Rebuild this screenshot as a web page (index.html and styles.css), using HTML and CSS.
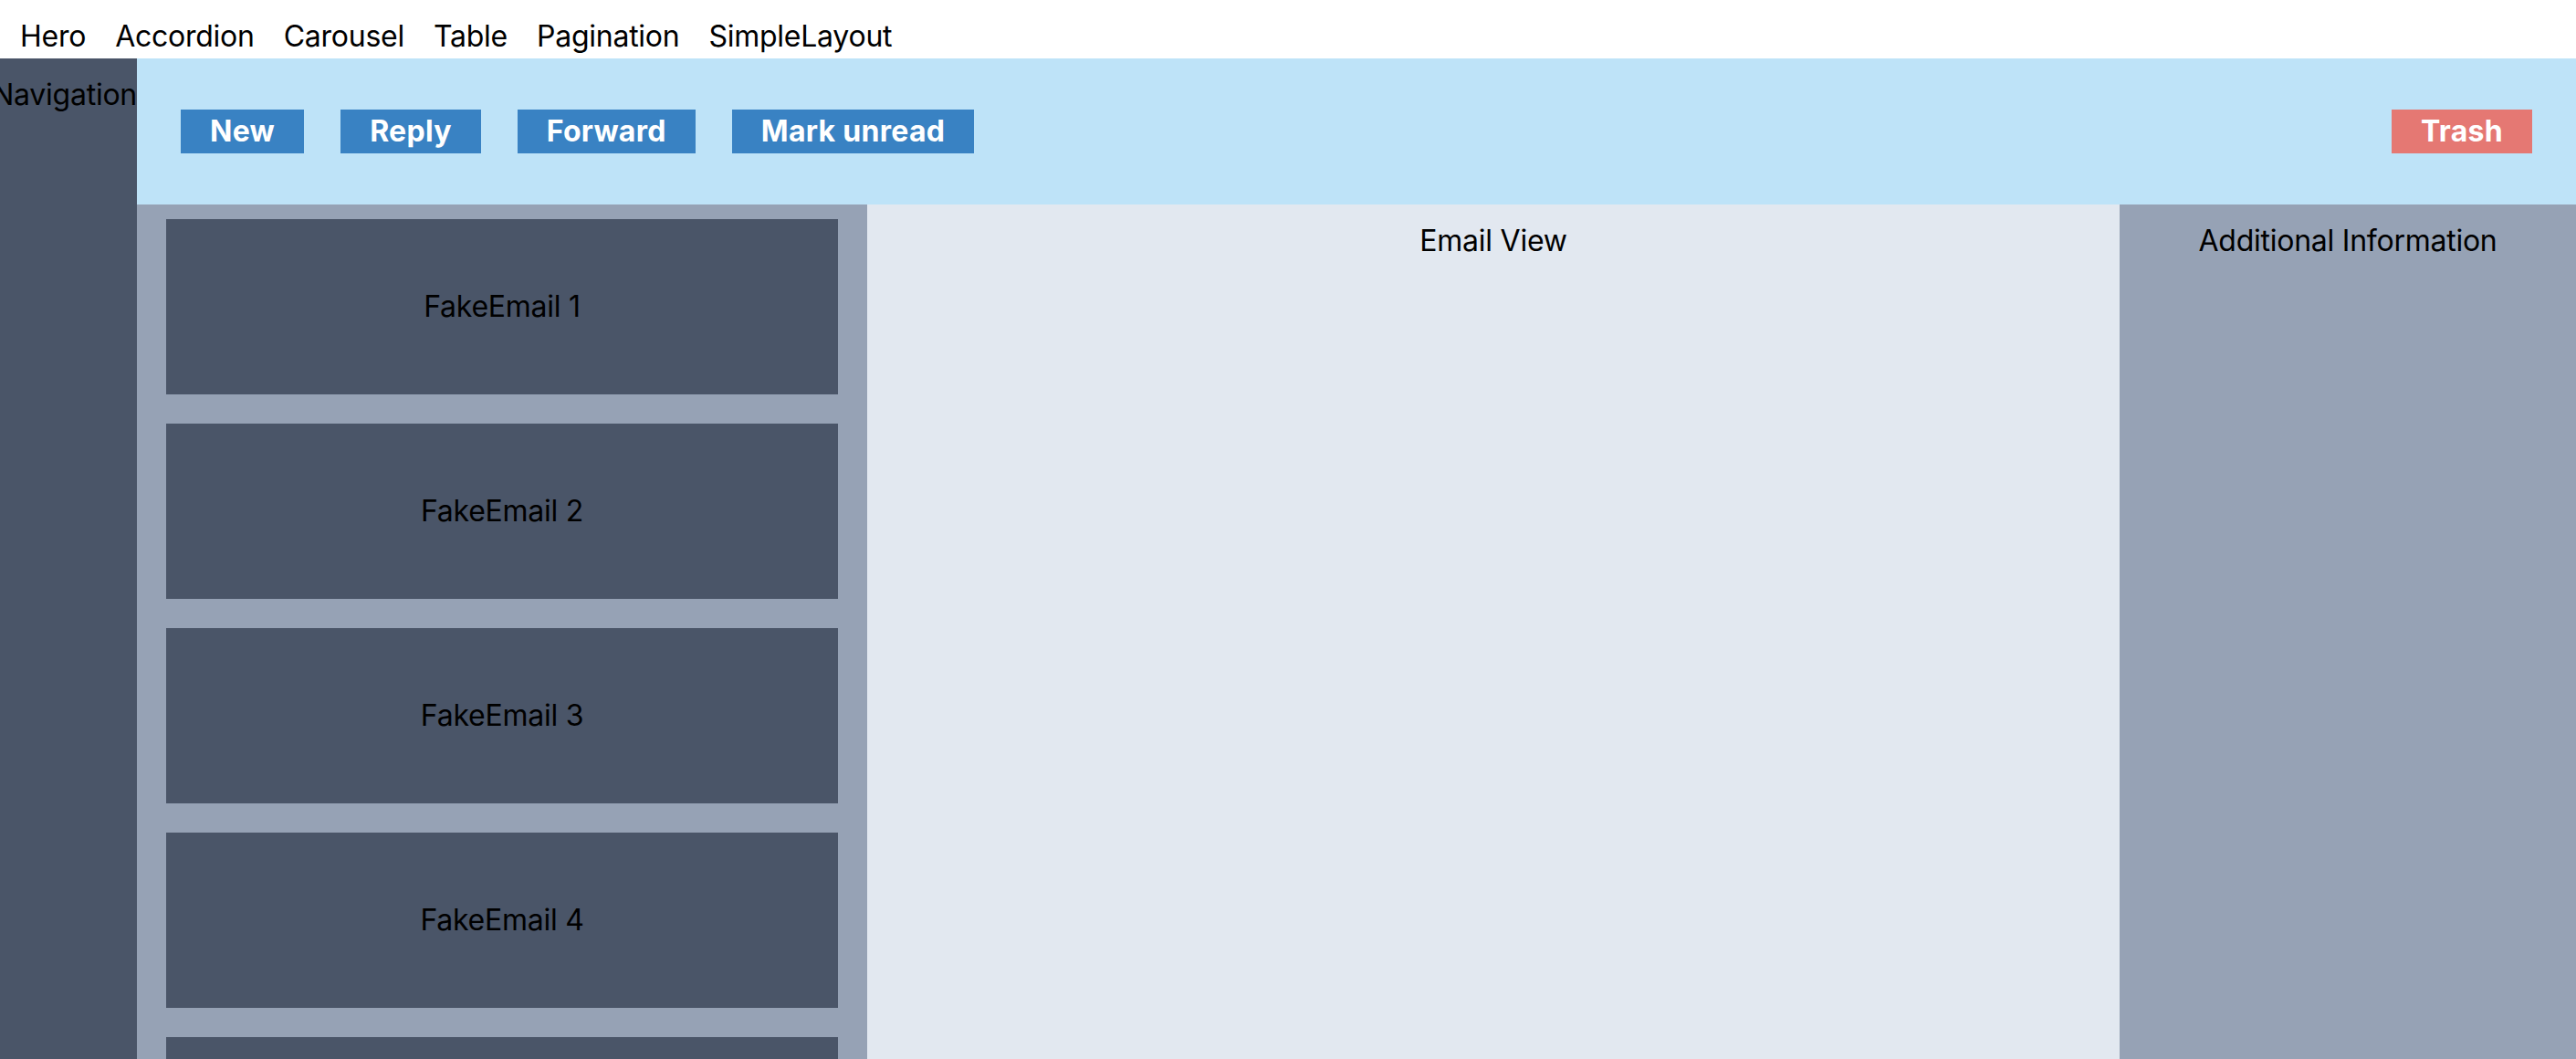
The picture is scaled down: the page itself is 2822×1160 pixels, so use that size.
FILE: index.html
```html
<!DOCTYPE html>
<html lang="en">
<head>
<meta charset="utf-8">
<title>SimpleLayout</title>
<link rel="stylesheet" href="styles.css">
</head>
<body>
<header class="topnav">
  <a class="topnav-link" href="#">Hero</a>
  <a class="topnav-link" href="#">Accordion</a>
  <a class="topnav-link" href="#">Carousel</a>
  <a class="topnav-link" href="#">Table</a>
  <a class="topnav-link" href="#">Pagination</a>
  <a class="topnav-link" href="#">SimpleLayout</a>
</header>
<div class="app">
  <aside class="sidebar"><span class="sidebar-label">Navigation</span></aside>
  <div class="main">
    <div class="toolbar">
      <div class="toolbar-group">
        <button class="btn">New</button>
        <button class="btn">Reply</button>
        <button class="btn">Forward</button>
        <button class="btn">Mark unread</button>
      </div>
      <button class="btn btn-danger">Trash</button>
    </div>
    <div class="panes">
      <div class="email-list">
        <div class="email-card">FakeEmail 1</div>
        <div class="email-card">FakeEmail 2</div>
        <div class="email-card">FakeEmail 3</div>
        <div class="email-card">FakeEmail 4</div>
        <div class="email-card">FakeEmail 5</div>
      </div>
      <div class="email-view"><div class="pane-title">Email View</div></div>
      <div class="info"><div class="pane-title">Additional Information</div></div>
    </div>
  </div>
</div>
</body>
</html>
```
FILE: styles.css
```css
html, body {
  margin: 0;
  padding: 0;
}
body {
  font-family: Inter, "Noto Sans", sans-serif;
  font-size: 32px;
  line-height: 48px;
  letter-spacing: -0.25px;
  color: #000;
  background: #fff;
  overflow: hidden;
  height: 1160px;
}
.topnav {
  height: 64px;
  box-sizing: border-box;
  padding: 16px 0 0 6px;
  display: flex;
  background: #fff;
}
.topnav-link {
  color: #000;
  text-decoration: none;
  padding: 0 16px;
}
.app {
  display: flex;
  height: 1096px;
}
.sidebar {
  width: 150px;
  flex: 0 0 150px;
  background: #4a5568;
  display: flex;
  justify-content: flex-end;
  padding-top: 16px;
  box-sizing: border-box;
  align-items: flex-start;
}
.sidebar-label {
  white-space: nowrap;
  flex-shrink: 0;
}
.main {
  flex: 1;
  display: flex;
  flex-direction: column;
  min-width: 0;
}
.toolbar {
  height: 160px;
  flex: 0 0 160px;
  background: #bee3f8;
  display: flex;
  align-items: center;
  justify-content: space-between;
  padding: 0 48px;
  box-sizing: border-box;
}
.toolbar-group {
  display: flex;
  gap: 40px;
}
.btn {
  font-family: inherit;
  font-size: 32px;
  line-height: 48px;
  font-weight: 700;
  letter-spacing: 0.3px;
  color: #fff;
  background: #3982c3;
  border: 0;
  border-radius: 0;
  padding: 0 32px;
  margin: 0;
}
.btn-danger {
  background: #e57873;
}
.panes {
  flex: 1;
  display: flex;
  min-height: 0;
}
.email-list {
  width: 800px;
  flex: 0 0 800px;
  background: #96a2b5;
  padding: 0 32px;
  box-sizing: border-box;
  display: flex;
  flex-direction: column;
}
.email-card {
  flex: 0 0 192px;
  height: 192px;
  margin: 16px 0;
  background: #4a5568;
  display: flex;
  align-items: center;
  justify-content: center;
}
.email-view {
  flex: 1;
  background: #e2e8f0;
  padding-top: 16px;
}
.info {
  width: 500px;
  flex: 0 0 500px;
  background: #96a2b5;
  padding-top: 16px;
}
.pane-title {
  text-align: center;
}
```
